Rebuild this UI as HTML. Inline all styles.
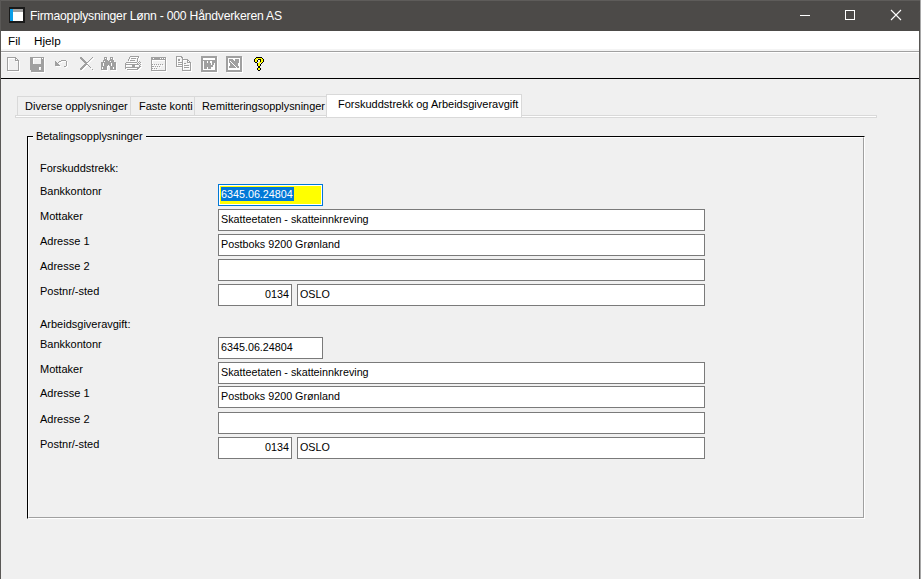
<!DOCTYPE html>
<html><head><meta charset="utf-8">
<style>
*{margin:0;padding:0;box-sizing:border-box}
html,body{width:921px;height:579px;overflow:hidden;background:#f0f0f0}
body{position:relative;font-family:"Liberation Sans",sans-serif;font-size:11px;color:#000}
.a{position:absolute;white-space:nowrap}
#title{left:0;top:0;width:921px;height:31px;background:#4c4a48}
#ttext{left:30px;top:9px;letter-spacing:-0.22px;font-size:12.2px;color:#fff;line-height:14px}
#menu{left:1px;top:31px;width:919px;height:18px;background:#fff}
.mi{top:34px;font-size:11.7px;line-height:14px}
#lb{left:0;top:0;width:1px;height:579px;background:#5a5856}
#tb{left:0;top:0;width:921px;height:1px;background:#5e5c5a}
#rb{left:919px;top:31px;width:1px;height:548px;background:#575553}
#rb2{left:920px;top:0;width:1px;height:579px;background:#a8a8a8}
.lbl{line-height:13px}
.fld{position:absolute;background:#fff;border:1px solid #7a7a7a;height:22px}
.ft{position:absolute;line-height:13px;white-space:nowrap;font-size:10.75px}
</style></head><body>
<div class="a" id="title"></div>
<div class="a" id="tb"></div>
<div class="a" id="rb2"></div>
<div class="a" id="ttext">Firmaopplysninger Lønn - 000 Håndverkeren AS</div>
<!-- window icon -->
<svg class="a" style="left:9px;top:7px" width="16" height="16" viewBox="0 0 16 16" shape-rendering="crispEdges">
<rect x="0" y="0" width="16" height="16" fill="#1a1a1a"/>
<rect x="1" y="2" width="13" height="12" fill="#fff"/>
<rect x="1" y="2" width="3" height="12" fill="#0a9ee8"/>
<rect x="4" y="2" width="10" height="3" fill="#a0a0a0"/>
</svg>
<!-- caption buttons -->
<div class="a" style="left:800px;top:15px;width:10px;height:1px;background:#fff"></div>
<div class="a" style="left:845px;top:10px;width:10px;height:10px;border:1px solid #fff"></div>
<svg class="a" style="left:890px;top:9px" width="12" height="12" viewBox="0 0 12 12"><path d="M1 1L11 11M11 1L1 11" stroke="#fff" stroke-width="1.1"/></svg>

<div class="a" id="menu"></div>
<div class="a" id="lb"></div>
<div class="a" id="rb"></div>
<div class="a mi" style="left:8px">Fil</div>
<div class="a mi" style="left:34px">Hjelp</div>
<div class="a" style="left:1px;top:49px;width:918px;height:2px;background:#f4f4f4"></div>
<div class="a" style="left:1px;top:51px;width:918px;height:1px;background:#a0a0a0"></div>
<div class="a" style="left:1px;top:52px;width:918px;height:1px;background:#fff"></div>
<div class="a" style="left:1px;top:78px;width:918px;height:1px;background:#000"></div>
<svg class="a" style="left:0px;top:52px" width="300" height="26" shape-rendering="crispEdges"><path fill="#ffffff" d="M131 5h7v1h-7zM139 5h1v1h-1zM177 5h4v1h-4zM217 5h1v1h-1zM242 5h1v1h-1zM8 6h7v1h-7zM33 6h8v1h-8zM42 6h1v1h-1zM44 6h1v1h-1zM93 6h1v1h-1zM105 6h1v1h-1zM107 6h1v1h-1zM111 6h1v1h-1zM113 6h1v1h-1zM130 6h1v1h-1zM139 6h1v1h-1zM153 6h1v1h-1zM160 6h1v1h-1zM162 6h1v1h-1zM164 6h1v1h-1zM166 6h1v1h-1zM177 6h1v1h-1zM183 6h1v1h-1zM203 6h12v1h-12zM217 6h1v1h-1zM228 6h12v1h-12zM242 6h1v1h-1zM8 7h1v1h-1zM16 7h1v1h-1zM33 7h1v1h-1zM44 7h1v1h-1zM92 7h1v1h-1zM107 7h1v1h-1zM113 7h1v1h-1zM130 7h1v1h-1zM132 7h5v1h-5zM138 7h1v1h-1zM166 7h1v1h-1zM177 7h1v1h-1zM203 7h12v1h-12zM217 7h1v1h-1zM228 7h1v1h-1zM233 7h2v1h-2zM239 7h1v1h-1zM242 7h1v1h-1zM8 8h1v1h-1zM33 8h1v1h-1zM44 8h1v1h-1zM91 8h1v1h-1zM129 8h1v1h-1zM138 8h1v1h-1zM152 8h13v1h-13zM166 8h1v1h-1zM177 8h1v1h-1zM180 8h1v1h-1zM183 8h4v1h-4zM217 8h1v1h-1zM228 8h1v1h-1zM234 8h1v1h-1zM239 8h1v1h-1zM242 8h1v1h-1zM258 8h2v1h-2zM8 9h1v1h-1zM16 9h2v1h-2zM19 9h1v1h-1zM33 9h1v1h-1zM44 9h1v1h-1zM62 9h4v1h-4zM90 9h1v1h-1zM104 9h1v1h-1zM110 9h1v1h-1zM114 9h1v1h-1zM129 9h1v1h-1zM131 9h5v1h-5zM138 9h1v1h-1zM152 9h1v1h-1zM166 9h1v1h-1zM177 9h1v1h-1zM179 9h2v1h-2zM183 9h1v1h-1zM188 9h1v1h-1zM203 9h1v1h-1zM207 9h1v1h-1zM210 9h2v1h-2zM217 9h1v1h-1zM228 9h1v1h-1zM230 9h1v1h-1zM239 9h1v1h-1zM242 9h1v1h-1zM8 10h1v1h-1zM19 10h1v1h-1zM33 10h1v1h-1zM44 10h1v1h-1zM60 10h2v1h-2zM67 10h1v1h-1zM89 10h1v1h-1zM152 10h1v1h-1zM166 10h1v1h-1zM177 10h1v1h-1zM183 10h1v1h-1zM203 10h1v1h-1zM207 10h1v1h-1zM210 10h2v1h-2zM217 10h1v1h-1zM228 10h1v1h-1zM231 10h1v1h-1zM239 10h1v1h-1zM242 10h1v1h-1zM8 11h1v1h-1zM19 11h1v1h-1zM33 11h1v1h-1zM44 11h1v1h-1zM59 11h1v1h-1zM67 11h1v1h-1zM87 11h2v1h-2zM103 11h1v1h-1zM111 11h1v1h-1zM116 11h1v1h-1zM127 11h10v1h-10zM141 11h1v1h-1zM152 11h1v1h-1zM166 11h1v1h-1zM177 11h1v1h-1zM179 11h3v1h-3zM183 11h1v1h-1zM188 11h2v1h-2zM191 11h1v1h-1zM203 11h1v1h-1zM211 11h1v1h-1zM214 11h1v1h-1zM217 11h1v1h-1zM228 11h2v1h-2zM232 11h1v1h-1zM238 11h2v1h-2zM242 11h1v1h-1zM8 12h1v1h-1zM19 12h1v1h-1zM44 12h1v1h-1zM67 12h1v1h-1zM103 12h1v1h-1zM111 12h1v1h-1zM116 12h1v1h-1zM166 12h1v1h-1zM177 12h1v1h-1zM183 12h1v1h-1zM185 12h2v1h-2zM191 12h1v1h-1zM203 12h1v1h-1zM211 12h1v1h-1zM214 12h1v1h-1zM217 12h1v1h-1zM228 12h2v1h-2zM233 12h1v1h-1zM238 12h2v1h-2zM242 12h1v1h-1zM8 13h1v1h-1zM19 13h1v1h-1zM44 13h1v1h-1zM67 13h1v1h-1zM86 13h2v1h-2zM103 13h1v1h-1zM108 13h1v1h-1zM111 13h1v1h-1zM116 13h1v1h-1zM126 13h6v1h-6zM135 13h4v1h-4zM141 13h1v1h-1zM152 13h2v1h-2zM155 13h1v1h-1zM157 13h1v1h-1zM159 13h1v1h-1zM161 13h1v1h-1zM163 13h1v1h-1zM166 13h1v1h-1zM177 13h1v1h-1zM179 13h3v1h-3zM183 13h1v1h-1zM191 13h1v1h-1zM203 13h1v1h-1zM213 13h2v1h-2zM217 13h1v1h-1zM228 13h2v1h-2zM234 13h1v1h-1zM238 13h2v1h-2zM242 13h1v1h-1zM8 14h1v1h-1zM19 14h1v1h-1zM44 14h1v1h-1zM56 14h5v1h-5zM67 14h1v1h-1zM85 14h2v1h-2zM107 14h2v1h-2zM116 14h1v1h-1zM126 14h1v1h-1zM135 14h1v1h-1zM166 14h1v1h-1zM183 14h1v1h-1zM185 14h5v1h-5zM191 14h1v1h-1zM203 14h1v1h-1zM213 14h2v1h-2zM217 14h1v1h-1zM228 14h1v1h-1zM235 14h1v1h-1zM239 14h1v1h-1zM242 14h1v1h-1zM8 15h1v1h-1zM19 15h1v1h-1zM39 15h2v1h-2zM44 15h1v1h-1zM65 15h2v1h-2zM84 15h2v1h-2zM102 15h1v1h-1zM107 15h1v1h-1zM113 15h1v1h-1zM116 15h1v1h-1zM140 15h2v1h-2zM152 15h3v1h-3zM156 15h1v1h-1zM158 15h1v1h-1zM160 15h1v1h-1zM166 15h1v1h-1zM177 15h5v1h-5zM183 15h1v1h-1zM191 15h1v1h-1zM203 15h1v1h-1zM207 15h1v1h-1zM211 15h4v1h-4zM217 15h1v1h-1zM228 15h1v1h-1zM236 15h1v1h-1zM239 15h1v1h-1zM242 15h1v1h-1zM8 16h1v1h-1zM19 16h1v1h-1zM39 16h1v1h-1zM44 16h1v1h-1zM83 16h2v1h-2zM91 16h1v1h-1zM102 16h1v1h-1zM107 16h1v1h-1zM113 16h1v1h-1zM116 16h1v1h-1zM126 16h11v1h-11zM139 16h2v1h-2zM166 16h1v1h-1zM183 16h1v1h-1zM185 16h5v1h-5zM191 16h1v1h-1zM203 16h1v1h-1zM207 16h1v1h-1zM211 16h4v1h-4zM217 16h1v1h-1zM228 16h12v1h-12zM242 16h1v1h-1zM8 17h1v1h-1zM19 17h1v1h-1zM39 17h1v1h-1zM44 17h1v1h-1zM82 17h2v1h-2zM107 17h1v1h-1zM116 17h1v1h-1zM126 17h1v1h-1zM138 17h2v1h-2zM152 17h2v1h-2zM155 17h1v1h-1zM157 17h1v1h-1zM166 17h1v1h-1zM183 17h1v1h-1zM191 17h1v1h-1zM203 17h12v1h-12zM217 17h1v1h-1zM228 17h12v1h-12zM242 17h1v1h-1zM19 18h1v1h-1zM44 18h1v1h-1zM81 18h2v1h-2zM93 18h1v1h-1zM102 18h6v1h-6zM111 18h6v1h-6zM128 18h11v1h-11zM166 18h1v1h-1zM191 18h1v1h-1zM217 18h1v1h-1zM242 18h1v1h-1zM8 19h12v1h-12zM44 19h1v1h-1zM152 19h15v1h-15zM183 19h9v1h-9zM217 19h1v1h-1zM242 19h1v1h-1zM32 20h13v1h-13zM202 20h16v1h-16zM227 20h16v1h-16z"/><path fill="#a0a0a0" d="M130 4h9v1h-9zM176 4h6v1h-6zM201 4h16v1h-16zM226 4h16v1h-16zM7 5h9v1h-9zM30 5h14v1h-14zM80 5h2v1h-2zM92 5h1v1h-1zM104 5h3v1h-3zM110 5h3v1h-3zM129 5h1v1h-1zM138 5h1v1h-1zM151 5h15v1h-15zM176 5h1v1h-1zM181 5h2v1h-2zM201 5h16v1h-16zM226 5h16v1h-16zM7 6h1v1h-1zM15 6h2v1h-2zM30 6h3v1h-3zM41 6h1v1h-1zM43 6h1v1h-1zM80 6h3v1h-3zM91 6h1v1h-1zM104 6h1v1h-1zM106 6h1v1h-1zM110 6h1v1h-1zM112 6h1v1h-1zM129 6h1v1h-1zM131 6h5v1h-5zM137 6h1v1h-1zM151 6h2v1h-2zM154 6h6v1h-6zM161 6h1v1h-1zM163 6h1v1h-1zM165 6h1v1h-1zM176 6h1v1h-1zM182 6h1v1h-1zM201 6h2v1h-2zM215 6h2v1h-2zM226 6h2v1h-2zM240 6h2v1h-2zM7 7h1v1h-1zM15 7h1v1h-1zM17 7h1v1h-1zM30 7h3v1h-3zM41 7h3v1h-3zM81 7h3v1h-3zM90 7h1v1h-1zM104 7h3v1h-3zM110 7h3v1h-3zM128 7h1v1h-1zM137 7h1v1h-1zM151 7h15v1h-15zM176 7h1v1h-1zM178 7h2v1h-2zM182 7h6v1h-6zM201 7h2v1h-2zM215 7h2v1h-2zM226 7h2v1h-2zM229 7h4v1h-4zM235 7h4v1h-4zM240 7h2v1h-2zM7 8h1v1h-1zM15 8h4v1h-4zM30 8h3v1h-3zM41 8h3v1h-3zM61 8h5v1h-5zM82 8h3v1h-3zM89 8h1v1h-1zM103 8h5v1h-5zM109 8h5v1h-5zM128 8h1v1h-1zM130 8h5v1h-5zM137 8h1v1h-1zM151 8h1v1h-1zM165 8h1v1h-1zM176 8h1v1h-1zM178 8h2v1h-2zM182 8h1v1h-1zM187 8h2v1h-2zM201 8h16v1h-16zM226 8h2v1h-2zM229 8h5v1h-5zM235 8h4v1h-4zM240 8h2v1h-2zM7 9h1v1h-1zM18 9h1v1h-1zM30 9h3v1h-3zM41 9h3v1h-3zM55 9h1v1h-1zM59 9h2v1h-2zM66 9h1v1h-1zM83 9h3v1h-3zM88 9h1v1h-1zM103 9h1v1h-1zM105 9h5v1h-5zM111 9h3v1h-3zM137 9h1v1h-1zM139 9h1v1h-1zM151 9h1v1h-1zM165 9h1v1h-1zM176 9h1v1h-1zM182 9h1v1h-1zM187 9h1v1h-1zM189 9h1v1h-1zM201 9h2v1h-2zM204 9h3v1h-3zM208 9h2v1h-2zM212 9h5v1h-5zM226 9h2v1h-2zM229 9h1v1h-1zM231 9h8v1h-8zM240 9h2v1h-2zM7 10h1v1h-1zM18 10h1v1h-1zM30 10h3v1h-3zM41 10h3v1h-3zM55 10h2v1h-2zM58 10h1v1h-1zM66 10h1v1h-1zM84 10h4v1h-4zM101 10h15v1h-15zM126 10h11v1h-11zM138 10h1v1h-1zM140 10h1v1h-1zM151 10h1v1h-1zM165 10h1v1h-1zM176 10h1v1h-1zM178 10h5v1h-5zM187 10h4v1h-4zM201 10h2v1h-2zM204 10h3v1h-3zM208 10h2v1h-2zM212 10h5v1h-5zM226 10h2v1h-2zM229 10h2v1h-2zM232 10h7v1h-7zM240 10h2v1h-2zM7 11h1v1h-1zM18 11h1v1h-1zM30 11h3v1h-3zM41 11h3v1h-3zM55 11h3v1h-3zM66 11h1v1h-1zM85 11h2v1h-2zM101 11h2v1h-2zM104 11h7v1h-7zM112 11h4v1h-4zM125 11h1v1h-1zM137 11h1v1h-1zM139 11h1v1h-1zM151 11h1v1h-1zM165 11h1v1h-1zM176 11h1v1h-1zM182 11h1v1h-1zM184 11h2v1h-2zM190 11h1v1h-1zM201 11h2v1h-2zM204 11h7v1h-7zM212 11h2v1h-2zM215 11h2v1h-2zM226 11h2v1h-2zM230 11h2v1h-2zM233 11h5v1h-5zM240 11h2v1h-2zM7 12h1v1h-1zM18 12h1v1h-1zM30 12h14v1h-14zM55 12h4v1h-4zM66 12h1v1h-1zM84 12h4v1h-4zM101 12h2v1h-2zM104 12h7v1h-7zM112 12h4v1h-4zM125 12h14v1h-14zM140 12h1v1h-1zM151 12h2v1h-2zM154 12h1v1h-1zM156 12h1v1h-1zM158 12h1v1h-1zM160 12h1v1h-1zM162 12h1v1h-1zM165 12h1v1h-1zM176 12h1v1h-1zM178 12h5v1h-5zM190 12h1v1h-1zM201 12h2v1h-2zM204 12h7v1h-7zM212 12h2v1h-2zM215 12h2v1h-2zM226 12h2v1h-2zM230 12h3v1h-3zM234 12h4v1h-4zM240 12h2v1h-2zM7 13h1v1h-1zM18 13h1v1h-1zM30 13h14v1h-14zM55 13h5v1h-5zM66 13h1v1h-1zM83 13h3v1h-3zM88 13h1v1h-1zM101 13h2v1h-2zM104 13h4v1h-4zM109 13h2v1h-2zM112 13h4v1h-4zM125 13h1v1h-1zM132 13h3v1h-3zM139 13h1v1h-1zM151 13h1v1h-1zM165 13h1v1h-1zM176 13h1v1h-1zM182 13h1v1h-1zM184 13h5v1h-5zM190 13h1v1h-1zM201 13h2v1h-2zM204 13h9v1h-9zM215 13h2v1h-2zM226 13h2v1h-2zM230 13h4v1h-4zM235 13h3v1h-3zM240 13h2v1h-2zM7 14h1v1h-1zM18 14h1v1h-1zM30 14h14v1h-14zM64 14h2v1h-2zM82 14h3v1h-3zM89 14h1v1h-1zM101 14h6v1h-6zM110 14h6v1h-6zM125 14h1v1h-1zM132 14h3v1h-3zM139 14h2v1h-2zM151 14h3v1h-3zM155 14h1v1h-1zM157 14h1v1h-1zM159 14h1v1h-1zM165 14h1v1h-1zM176 14h7v1h-7zM190 14h1v1h-1zM201 14h2v1h-2zM204 14h9v1h-9zM215 14h2v1h-2zM226 14h2v1h-2zM229 14h6v1h-6zM236 14h3v1h-3zM240 14h2v1h-2zM7 15h1v1h-1zM18 15h1v1h-1zM30 15h9v1h-9zM41 15h3v1h-3zM81 15h3v1h-3zM90 15h1v1h-1zM101 15h1v1h-1zM103 15h4v1h-4zM110 15h3v1h-3zM114 15h2v1h-2zM125 15h15v1h-15zM151 15h1v1h-1zM165 15h1v1h-1zM182 15h1v1h-1zM184 15h5v1h-5zM190 15h1v1h-1zM201 15h2v1h-2zM204 15h3v1h-3zM208 15h3v1h-3zM215 15h2v1h-2zM226 15h2v1h-2zM229 15h7v1h-7zM237 15h2v1h-2zM240 15h2v1h-2zM7 16h1v1h-1zM18 16h1v1h-1zM30 16h9v1h-9zM41 16h3v1h-3zM80 16h3v1h-3zM101 16h1v1h-1zM103 16h4v1h-4zM110 16h3v1h-3zM114 16h2v1h-2zM125 16h1v1h-1zM137 16h2v1h-2zM151 16h2v1h-2zM154 16h1v1h-1zM156 16h1v1h-1zM165 16h1v1h-1zM182 16h1v1h-1zM190 16h1v1h-1zM201 16h2v1h-2zM204 16h3v1h-3zM208 16h3v1h-3zM215 16h2v1h-2zM226 16h2v1h-2zM240 16h2v1h-2zM7 17h1v1h-1zM18 17h1v1h-1zM30 17h9v1h-9zM41 17h3v1h-3zM80 17h2v1h-2zM92 17h1v1h-1zM101 17h6v1h-6zM110 17h6v1h-6zM127 17h11v1h-11zM151 17h1v1h-1zM165 17h1v1h-1zM182 17h1v1h-1zM190 17h1v1h-1zM201 17h2v1h-2zM215 17h2v1h-2zM226 17h2v1h-2zM240 17h2v1h-2zM7 18h12v1h-12zM31 18h13v1h-13zM151 18h15v1h-15zM182 18h9v1h-9zM201 18h16v1h-16zM226 18h16v1h-16zM31 19h13v1h-13zM201 19h16v1h-16zM226 19h16v1h-16z"/><path fill="#000000" d="M256 5h6v1h-6zM255 6h1v1h-1zM262 6h1v1h-1zM254 7h1v1h-1zM258 7h3v1h-3zM263 7h1v1h-1zM254 8h1v1h-1zM257 8h1v1h-1zM260 8h1v1h-1zM263 8h1v1h-1zM254 9h1v1h-1zM257 9h1v1h-1zM260 9h1v1h-1zM263 9h1v1h-1zM255 10h2v1h-2zM262 10h1v1h-1zM257 11h1v1h-1zM261 11h1v1h-1zM257 12h1v1h-1zM260 12h1v1h-1zM257 13h1v1h-1zM260 13h1v1h-1zM258 14h2v1h-2zM258 15h2v1h-2zM257 16h1v1h-1zM260 16h1v1h-1zM257 17h1v1h-1zM260 17h1v1h-1zM258 18h2v1h-2z"/><path fill="#ffff00" d="M256 6h6v1h-6zM255 7h2v1h-2zM261 7h2v1h-2zM255 8h2v1h-2zM261 8h2v1h-2zM255 9h2v1h-2zM261 9h2v1h-2zM259 10h3v1h-3zM258 11h2v1h-2zM258 12h2v1h-2zM258 13h2v1h-2zM258 16h2v1h-2zM258 17h2v1h-2z"/></svg>

<!-- tabs -->
<div class="a" style="left:15px;top:115px;width:862px;height:3px;border:1px solid #d9d9d9;background:#fff"></div>
<div class="a" style="left:17px;top:96px;width:114px;height:20px;border:1px solid #d9d9d9;border-bottom:0"></div>
<div class="a" style="left:130px;top:96px;width:65px;height:20px;border:1px solid #d9d9d9;border-bottom:0;border-left:0"></div>
<div class="a" style="left:194px;top:96px;width:133px;height:20px;border:1px solid #d9d9d9;border-bottom:0;border-left:0"></div>
<div class="a" style="left:326px;top:94px;width:196px;height:23px;border:1px solid #d9d9d9;border-bottom:0;background:#fff"></div>
<div class="a lbl" style="left:25px;top:100px">Diverse opplysninger</div>
<div class="a lbl" style="left:139px;top:100px">Faste konti</div>
<div class="a lbl" style="left:202px;top:100px;font-size:10.9px">Remitteringsopplysninger</div>
<div class="a lbl" style="left:338px;top:98px">Forskuddstrekk og Arbeidsgiveravgift</div>

<!-- group box -->
<div class="a" style="left:27px;top:136px;width:838px;height:383px;border-top:1px solid #000;border-left:1px solid #000;border-right:1px solid #fff;border-bottom:1px solid #fff"></div>
<div class="a" style="left:28px;top:137px;width:836px;height:381px;border-top:1px solid #fff;border-left:1px solid #fff;border-right:1px solid #a0a0a0;border-bottom:1px solid #a0a0a0"></div>
<div class="a lbl" style="left:33px;top:130px;padding:0 3px 0 3px;background:#f0f0f0;font-size:10.9px">Betalingsopplysninger</div>

<!-- section 1 -->
<div class="a lbl" style="left:40px;top:162px">Forskuddstrekk:</div>
<div class="a lbl" style="left:40px;top:185px">Bankkontonr</div>
<div class="a lbl" style="left:40px;top:210px">Mottaker</div>
<div class="a lbl" style="left:40px;top:235px">Adresse 1</div>
<div class="a lbl" style="left:40px;top:260px">Adresse 2</div>
<div class="a lbl" style="left:40px;top:285px">Postnr/-sted</div>

<div class="a" style="left:218px;top:184px;width:105px;height:22px;border:1px solid #0078d7;background:#fff"></div>
<div class="a" style="left:220px;top:186px;width:101px;height:18px;background:#ffff00"></div>
<div class="a" style="left:221px;top:187px;width:73px;height:14px;background:#0078d7"></div>
<div class="a ft" style="left:221px;top:188px;color:#fff">6345.06.24804</div>

<div class="fld" style="left:218px;top:209px;width:487px"></div>
<div class="ft" style="left:221px;top:213px">Skatteetaten - skatteinnkreving</div>
<div class="fld" style="left:218px;top:234px;width:487px"></div>
<div class="ft" style="left:221px;top:238px">Postboks 9200 Grønland</div>
<div class="fld" style="left:218px;top:259px;width:487px"></div>
<div class="fld" style="left:218px;top:284px;width:74px"></div>
<div class="ft" style="left:218px;top:288px;width:71px;text-align:right">0134</div>
<div class="fld" style="left:297px;top:284px;width:408px"></div>
<div class="ft" style="left:300px;top:288px">OSLO</div>

<!-- section 2 -->
<div class="a lbl" style="left:40px;top:318px">Arbeidsgiveravgift:</div>
<div class="a lbl" style="left:40px;top:338px">Bankkontonr</div>
<div class="a lbl" style="left:40px;top:363px">Mottaker</div>
<div class="a lbl" style="left:40px;top:387px">Adresse 1</div>
<div class="a lbl" style="left:40px;top:413px">Adresse 2</div>
<div class="a lbl" style="left:40px;top:438px">Postnr/-sted</div>

<div class="fld" style="left:218px;top:337px;width:105px"></div>
<div class="ft" style="left:221px;top:341px">6345.06.24804</div>
<div class="fld" style="left:218px;top:362px;width:487px"></div>
<div class="ft" style="left:221px;top:366px">Skatteetaten - skatteinnkreving</div>
<div class="fld" style="left:218px;top:386px;width:487px"></div>
<div class="ft" style="left:221px;top:390px">Postboks 9200 Grønland</div>
<div class="fld" style="left:218px;top:412px;width:487px"></div>
<div class="fld" style="left:218px;top:437px;width:74px"></div>
<div class="ft" style="left:218px;top:441px;width:71px;text-align:right">0134</div>
<div class="fld" style="left:297px;top:437px;width:408px"></div>
<div class="ft" style="left:300px;top:441px">OSLO</div>

</body></html>
